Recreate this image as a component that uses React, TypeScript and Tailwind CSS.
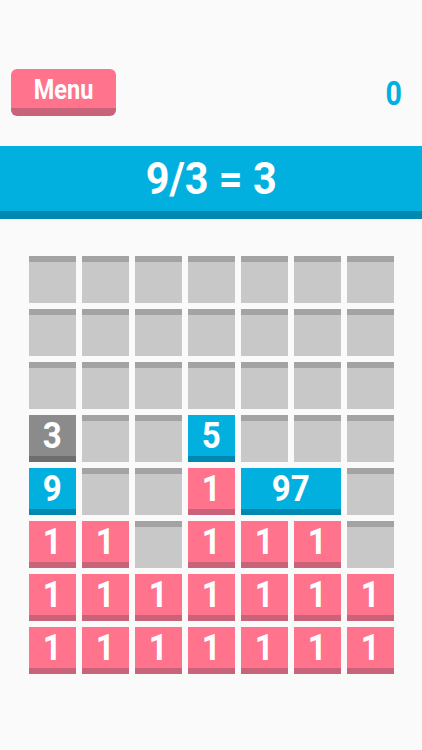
type Cell =
  | { kind: 'empty' }
  | { kind: 'pink' | 'blue' | 'dark'; value: string; span?: number }

const E: Cell = { kind: 'empty' }
const P: Cell = { kind: 'pink', value: '1' }

const ROWS: Cell[][] = [
  [E, E, E, E, E, E, E],
  [E, E, E, E, E, E, E],
  [E, E, E, E, E, E, E],
  [{ kind: 'dark', value: '3' }, E, E, { kind: 'blue', value: '5' }, E, E, E],
  [{ kind: 'blue', value: '9' }, E, E, P, { kind: 'blue', value: '97', span: 2 }, E],
  [P, P, E, P, P, P, E],
  [P, P, P, P, P, P, P],
  [P, P, P, P, P, P, P],
]

const FACE = {
  pink: 'bg-[#ff738d] border-[#c9637a]',
  blue: 'bg-[#02b0e0] border-[#0188b0]',
  dark: 'bg-[#8b8b8b] border-[#6e6e6e]',
}

function Tile({ cell }: { cell: Cell }) {
  if (cell.kind === 'empty') {
    return <div className="h-[47px] border-t-[6px] border-[#a3a3a3] bg-[#c8c8c8]" />
  }
  return (
    <div
      className={`flex h-[47px] items-center justify-center border-b-[6px] text-[36px] font-bold leading-none text-white ${FACE[cell.kind]} ${cell.span === 2 ? 'col-span-2' : ''}`}
    >
      <span className="inline-block scale-x-[0.92]">{cell.value}</span>
    </div>
  )
}

export default function App() {
  return (
    <div
      className="min-h-[750px] bg-[#fafafa]"
      style={{ fontFamily: 'Roboto, "Liberation Sans", sans-serif' }}
    >
      {/* Top bar */}
      <div className="flex items-center justify-between pl-[11px] pr-[18px] pt-[69px]">
        <button className="flex h-[47px] w-[105px] items-center justify-center rounded-[6px] border-b-[8px] border-[#c9637a] bg-[#ff738d] pt-[2px] text-[28px] font-bold leading-none text-white">
          <span className="inline-block scale-x-[0.84]">Menu</span>
        </button>
        <span className="text-[34px] font-bold leading-none text-[#02b0e0]">
          <span className="inline-block scale-x-[0.84]">0</span>
        </span>
      </div>

      {/* Equation */}
      <div className="mt-[30px] flex h-[73px] items-center justify-center border-b-[8px] border-[#0188b0] bg-[#02b0e0] text-[45px] font-bold leading-none text-white">
        <span className="inline-block scale-x-[0.92]">9/3 = 3</span>
      </div>

      {/* Board */}
      <div className="mt-[37px] grid grid-cols-[repeat(7,47px)] gap-[6px] pl-[29px]">
        {ROWS.map((row, r) => row.map((cell, c) => <Tile key={`${r}-${c}`} cell={cell} />))}
      </div>
    </div>
  )
}
